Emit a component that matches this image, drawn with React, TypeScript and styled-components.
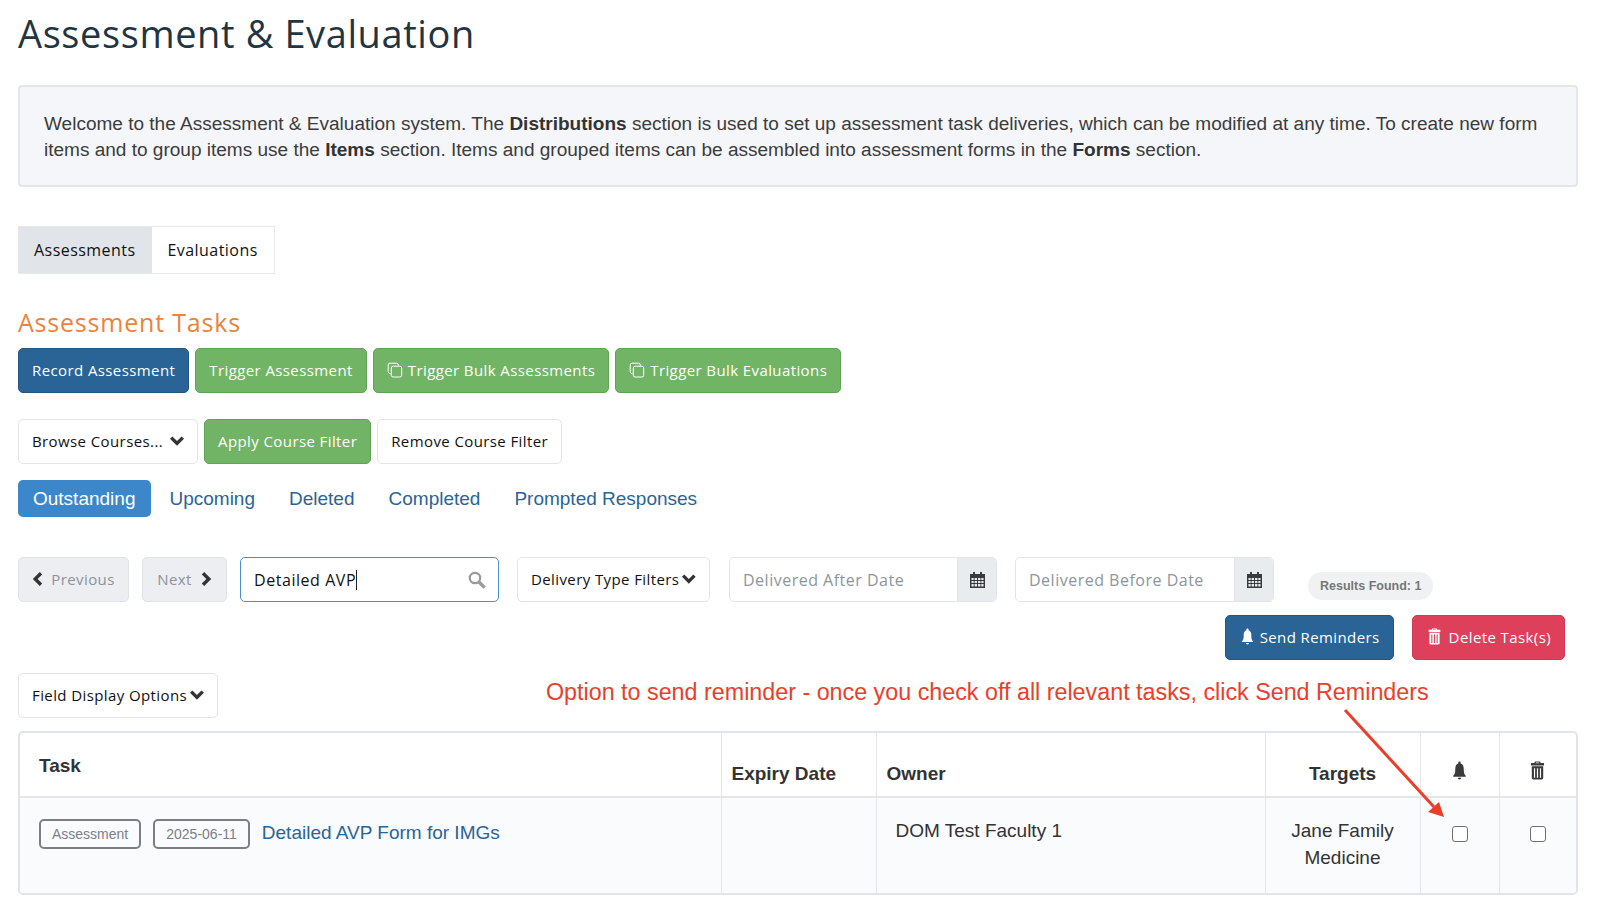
import React from "react"
import styled, { createGlobalStyle } from "styled-components"

const GlobalStyle = createGlobalStyle`
  html, body {
    margin: 0;
    padding: 0;
    background: #fff;
  }
`

const ui = `"Open Sans", "Noto Sans", sans-serif`
const body = `"Liberation Sans", Arial, sans-serif`

const BellIcon = ({ size = 16 }: { size?: number }) => (
  <svg width={size} height={size} viewBox="0 0 16 16" fill="currentColor">
    <path d="M8 0.5c.6 0 1 .4 1 1v.6c1.6.5 2.4 1.8 2.5 3.6l.2 3.6c.1 1.3.7 2.3 1.6 3.2v.7H2.7v-.7c.9-.9 1.5-1.9 1.6-3.2l.2-3.6c.1-1.8.9-3.1 2.5-3.6v-.6c0-.6.4-1 1-1z" />
    <path d="M6.6 14.1h2.8c0 .8-.6 1.4-1.4 1.4s-1.4-.6-1.4-1.4z" />
  </svg>
)

const TrashIcon = ({ size = 16 }: { size?: number }) => (
  <svg width={size} height={size} viewBox="0 0 16 16" fill="currentColor">
    <path fillRule="evenodd" d="M5.8 .5h4.4l.5 1.2h2.8v2H2.5v-2h2.8l.5-1.2zm.9 .8-.2.5h3l-.2-.5H6.7z" />
    <path fillRule="evenodd" d="M3.2 4.4h9.6v10c0 .6-.5 1.1-1.1 1.1H4.3c-.6 0-1.1-.5-1.1-1.1v-10zM5 6v8h1V6H5zm2.5 0v8h1V6h-1zM10 6v8h1V6h-1z" />
  </svg>
)

const CopyIcon = () => (
  <svg width="16" height="16" viewBox="0 0 16 16" fill="none" stroke="currentColor" strokeWidth="1">
    <path d="M3.5 11.5H3A1.8 1.8 0 0 1 1.2 9.7V3A1.8 1.8 0 0 1 3 1.2h6.5A1.8 1.8 0 0 1 11.3 3v.7" />
    <rect x="4.3" y="4.2" width="10.4" height="10.8" rx="1.8" />
  </svg>
)

const ChevronDown = () => (
  <svg width="14" height="10" viewBox="0 0 14 10" fill="#333">
    <path d="M0 2.8 2.4.4 7 5 11.6.4 14 2.8l-7 7z" />
  </svg>
)

const ChevronLeft = () => (
  <svg width="11" height="14" viewBox="0 0 11 14" fill="#333">
    <path d="M7.8 0 10.2 2.4 5.6 7l4.6 4.6L7.8 14 .8 7z" />
  </svg>
)

const ChevronRight = () => (
  <svg width="11" height="14" viewBox="0 0 11 14" fill="#333">
    <path d="M3.2 0 .8 2.4 5.4 7 .8 11.6 3.2 14l7-7z" />
  </svg>
)

const SearchIcon = () => (
  <svg width="18" height="18" viewBox="0 0 18 18" fill="none" stroke="#999" strokeWidth="2.2">
    <circle cx="7" cy="7" r="5.2" />
    <path d="M11 11l5.6 5.6" strokeWidth="3.2" />
  </svg>
)

const CalendarIcon = () => (
  <svg width="15" height="16" viewBox="0 0 15 16" fill="currentColor">
    <path d="M3 0h2v2h5V0h2v2h3v14H0V2h3V0z" />
    <path fill="#e9ecef" d="M1.5 6h2.2v2H1.5zM4.6 6h2.4v2H4.6zM8 6h2.4v2H8zM11.3 6h2.2v2h-2.2zM1.5 9h2.2v2H1.5zM4.6 9h2.4v2H4.6zM8 9h2.4v2H8zM11.3 9h2.2v2h-2.2zM1.5 12h2.2v2.5H1.5zM4.6 12h2.4v2.5H4.6zM8 12h2.4v2.5H8zM11.3 12h2.2v2.5h-2.2z" />
  </svg>
)

export default function App() {
  return (
    <Page>
      <GlobalStyle />
      <Title>Assessment &amp; Evaluation</Title>
      <Intro>
        Welcome to the Assessment &amp; Evaluation system. The <b>Distributions</b> section is used to set up
        assessment task deliveries, which can be modified at any time. To create new form items and to group
        items use the <b>Items</b> section. Items and grouped items can be assembled into assessment forms in
        the <b>Forms</b> section.
      </Intro>
      <Tabs>
        <Tab $active>Assessments</Tab>
        <Tab>Evaluations</Tab>
      </Tabs>
      <Heading>Assessment Tasks</Heading>
      <ButtonRow>
        <Button $kind="primary">Record Assessment</Button>
        <Button $kind="success">Trigger Assessment</Button>
        <Button $kind="success" $gap={5}><CopyIcon />Trigger Bulk Assessments</Button>
        <Button $kind="success" $gap={5}><CopyIcon />Trigger Bulk Evaluations</Button>
      </ButtonRow>
      <FilterRow>
        <Button $gap={7}>Browse Courses...<ChevronDown /></Button>
        <Button $kind="success">Apply Course Filter</Button>
        <Button>Remove Course Filter</Button>
      </FilterRow>
      <Pills>
        <Pill $active>Outstanding</Pill>
        <Pill>Upcoming</Pill>
        <Pill>Deleted</Pill>
        <Pill>Completed</Pill>
        <Pill>Prompted Responses</Pill>
      </Pills>
      <Toolbar>
        <Button $kind="disabled" $width={111} $gap={8}><ChevronLeft />Previous</Button>
        <Button $kind="disabled" $width={85} $gap={9}>Next<ChevronRight /></Button>
        <SearchBox>
          <span>Detailed AVP</span><Caret />
          <SearchSlot><SearchIcon /></SearchSlot>
        </SearchBox>
        <Button $width={193}>Delivery Type Filters<ChevronDown /></Button>
        <DateGroup $width={268} $offset={6}>
          <DateField>Delivered After Date</DateField>
          <DateAddon><CalendarIcon /></DateAddon>
        </DateGroup>
        <DateGroup $width={259} $offset={5}>
          <DateField>Delivered Before Date</DateField>
          <DateAddon><CalendarIcon /></DateAddon>
        </DateGroup>
        <ResultsPill>Results Found: 1</ResultsPill>
      </Toolbar>
      <ActionRow>
        <Button $kind="primary" $gap={4}><BellIcon size={17} />Send Reminders</Button>
        <Button $kind="danger" $gap={6}><TrashIcon size={17} />Delete Task(s)</Button>
      </ActionRow>
      <OptionsRow>
        <Button $width={200}>Field Display Options<ChevronDown /></Button>
        <Annotation>Option to send reminder - once you check off all relevant tasks, click Send Reminders</Annotation>
      </OptionsRow>
      <TableWrap>
        <Table>
          <colgroup>
            <col style={{ width: 701 }} />
            <col style={{ width: 155 }} />
            <col style={{ width: 389 }} />
            <col style={{ width: 155 }} />
            <col style={{ width: 79 }} />
            <col />
          </colgroup>
          <thead>
            <tr>
              <HeadCell $top>Task</HeadCell>
              <HeadCell>Expiry Date</HeadCell>
              <HeadCell>Owner</HeadCell>
              <HeadCell $center>Targets</HeadCell>
              <HeadCell $center><IconHead><BellIcon size={19} /></IconHead></HeadCell>
              <HeadCell $center><IconHead><TrashIcon size={19} /></IconHead></HeadCell>
            </tr>
          </thead>
          <tbody>
            <tr>
              <BodyCell>
                <TaskLine>
                  <Badge>Assessment</Badge>
                  <Badge>2025-06-11</Badge>
                  <TaskLink>Detailed AVP Form for IMGs</TaskLink>
                </TaskLine>
              </BodyCell>
              <BodyCell />
              <OwnerCell>DOM Test Faculty 1</OwnerCell>
              <TargetCell>Jane Family Medicine</TargetCell>
              <BodyCell><CheckBox /></BodyCell>
              <BodyCell><CheckBox /></BodyCell>
            </tr>
          </tbody>
        </Table>
      </TableWrap>
      <OverlayArrow viewBox="0 0 110 115" width="110" height="115">
        <line x1="2" y1="2" x2="91" y2="99" stroke="#e8402a" strokeWidth="3" />
        <polygon points="101,109 85,104 96,94" fill="#e8402a" />
      </OverlayArrow>
    </Page>
  )
}

const Page = styled.div`
  position: relative;
  width: 1600px;
  height: 905px;
  overflow: hidden;
  box-sizing: border-box;
  padding: 0 22px 0 18px;
  background: #fff;
`

const Title = styled.h1`
  margin: 0;
  height: 85px;
  padding-top: 9px;
  box-sizing: border-box;
  font-family: ${ui};
  font-weight: 400;
  font-size: 38px;
  line-height: 48px;
  letter-spacing: 0.6px;
  color: #1f3541;
`

const Intro = styled.div`
  box-sizing: border-box;
  height: 102px;
  padding: 24px 24px;
  background: #f4f6fa;
  border: 2px solid #e3e6ea;
  border-radius: 4px;
  font-family: ${body};
  font-size: 19.03px;
  line-height: 25.5px;
  color: #3c3c3c;
  b { color: #333; }
`

const Tabs = styled.div`
  display: inline-flex;
  margin-top: 39px;
  height: 48px;
  box-sizing: border-box;
  border: 1.5px solid #e6e8ec;
  vertical-align: top;
`

const Tab = styled.div<{ $active?: boolean }>`
  display: flex;
  align-items: center;
  padding: 0 16px 0 ${p => (p.$active ? 15 : 16)}px;
  background: ${p => (p.$active ? "#e1e5e9" : "#fff")};
  font-family: ${ui};
  font-size: 16px;
  letter-spacing: 0.45px;
  color: #111;
`

const Heading = styled.h2`
  margin: 29px 0 0;
  height: 45px;
  font-family: ${ui};
  font-weight: 400;
  font-size: 25px;
  line-height: 38px;
  letter-spacing: 0.8px;
  color: #e8843f;
`

const ButtonRow = styled.div`
  display: flex;
  gap: 6px;
`

const FilterRow = styled(ButtonRow)`
  margin-top: 26px;
`

const kinds = {
  default: "background:#fff;border-color:#e2e4ea;color:#111;",
  primary: "background:#2a6496;border-color:#24577f;color:#fff;",
  success: "background:#72b465;border-color:#62a256;color:#fff;",
  danger: "background:#de405c;border-color:#cf3a54;color:#fff;",
  disabled: "background:#eceef1;border-color:#dfe2e6;color:#8b939a;",
}

const Button = styled.div<{ $kind?: keyof typeof kinds; $width?: number; $gap?: number }>`
  box-sizing: border-box;
  display: flex;
  align-items: center;
  justify-content: center;
  gap: ${p => p.$gap ?? 3}px;
  height: 45px;
  padding: 0 13px 2px;
  ${p => (p.$width ? `width: ${p.$width}px;` : "")}
  border: 1.5px solid;
  border-radius: 5px;
  font-family: ${ui};
  font-size: 15px;
  letter-spacing: 0.4px;
  white-space: nowrap;
  ${p => kinds[p.$kind ?? "default"]}
`

const Pills = styled.div`
  display: flex;
  align-items: center;
  margin-top: 16px;
  height: 37px;
`

const Pill = styled.div<{ $active?: boolean }>`
  display: flex;
  align-items: center;
  height: 100%;
  padding: 0 ${p => (p.$active ? 16 : 15)}px 0 15px;
  margin-right: ${p => (p.$active ? 3 : 4)}px;
  border-radius: 5px;
  font-family: ${body};
  font-size: 19px;
  color: ${p => (p.$active ? "#fff" : "#2a6496")};
  background: ${p => (p.$active ? "#3b87ca" : "transparent")};
`

const Toolbar = styled.div`
  display: flex;
  align-items: flex-start;
  margin-top: 40px;
  height: 45px;
  gap: 13px;
`

const SearchBox = styled.div`
  box-sizing: border-box;
  display: flex;
  align-items: center;
  width: 259px;
  height: 45px;
  margin-right: 5px;
  padding: 0 13px;
  border: 1.5px solid #4a8fd0;
  border-radius: 5px;
  font-family: ${ui};
  font-size: 16px;
  letter-spacing: 0.55px;
  color: #111;
`

const Caret = styled.i`
  width: 1px;
  height: 20px;
  background: #222;
`

const SearchSlot = styled.span`
  display: flex;
  margin-left: auto;
  margin-right: -1px;
`

const DateGroup = styled.div<{ $width: number; $offset: number }>`
  box-sizing: border-box;
  display: flex;
  width: ${p => p.$width}px;
  height: 45px;
  margin-left: ${p => p.$offset}px;
  border: 1.5px solid #e2e4ea;
  border-radius: 5px;
  overflow: hidden;
`

const DateField = styled.div`
  flex: 1;
  display: flex;
  align-items: center;
  padding: 0 13px;
  font-family: ${ui};
  font-size: 16px;
  letter-spacing: 0.5px;
  color: #8d959c;
`

const DateAddon = styled.div`
  width: 38px;
  display: flex;
  align-items: center;
  justify-content: center;
  background: #e9ecef;
  border-left: 1.5px solid #dfe2e6;
  color: #3a3a3a;
`

const ResultsPill = styled.div`
  margin: 15px 0 0 21px;
  height: 28px;
  padding: 0 12px;
  display: flex;
  align-items: center;
  border-radius: 14px;
  background: #f0f1f2;
  font-family: ${body};
  font-size: 12.5px;
  font-weight: 700;
  color: #777;
`

const ActionRow = styled.div`
  display: flex;
  justify-content: flex-end;
  gap: 18px;
  margin: 13px 13px 0 0;
`

const OptionsRow = styled.div`
  display: flex;
  align-items: flex-start;
  margin-top: 13px;
`

const Annotation = styled.div`
  margin-left: 328px;
  font-family: ${body};
  font-size: 23.3px;
  line-height: 38px;
  color: #e8402a;
  white-space: nowrap;
`

const TableWrap = styled.div`
  margin-top: 13px;
  height: 164px;
  box-sizing: border-box;
  border: 2px solid #e1e4e9;
  border-radius: 5px;
  overflow: hidden;
`

const Table = styled.table`
  width: 100%;
  border-collapse: collapse;
  table-layout: fixed;
  font-family: ${body};
`

const HeadCell = styled.th<{ $top?: boolean; $center?: boolean }>`
  box-sizing: border-box;
  height: 64px;
  padding: ${p => (p.$top ? "20px 19px 0" : "0 10px 9px")};
  vertical-align: ${p => (p.$top ? "top" : "bottom")};
  text-align: ${p => (p.$center ? "center" : "left")};
  border-right: 1.5px solid #e3e6ea;
  border-bottom: 2px solid #e3e6ea;
  font-size: 19px;
  line-height: 26px;
  color: #333;
  &:last-child { border-right: 0; }
`

const IconHead = styled.span`
  display: inline-flex;
  color: #3a3a3a;
  padding-bottom: 6px;
`

const BodyCell = styled.td`
  box-sizing: border-box;
  height: 96px;
  padding: 21px 19px 0;
  vertical-align: top;
  background: #fafbfd;
  border-right: 1.5px solid #e3e6ea;
  font-size: 19px;
  line-height: 27px;
  color: #333;
  &:last-child { border-right: 0; }
`

const OwnerCell = styled(BodyCell)`
  padding-top: 19px;
`

const TargetCell = styled(BodyCell)`
  padding-top: 19px;
  text-align: center;
`

const TaskLine = styled.div`
  display: flex;
  align-items: center;
  gap: 12px;
`

const Badge = styled.span`
  box-sizing: border-box;
  height: 30px;
  padding: 0 11px;
  display: flex;
  align-items: center;
  border: 2px solid #7b7f85;
  border-radius: 5px;
  font-size: 14px;
  color: #7b7f85;
  background: #fafbfd;
`

const TaskLink = styled.span`
  padding-bottom: 3px;
  color: #2a6496;
  font-size: 19px;
`

const CheckBox = styled.span`
  display: block;
  box-sizing: border-box;
  width: 16px;
  height: 16px;
  margin: 7px auto 0;
  border: 1px solid #6f6f6f;
  border-radius: 3px;
  background: #fff;
`

const OverlayArrow = styled.svg`
  position: absolute;
  left: 1343px;
  top: 708px;
`
